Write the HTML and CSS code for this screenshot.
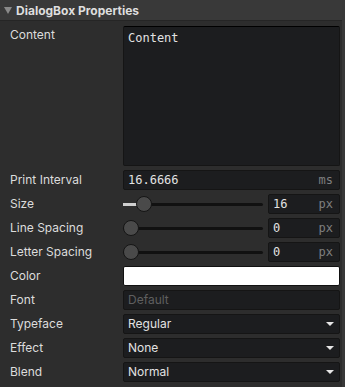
FILE: index.html
```html
<!DOCTYPE html>
<html lang="en">
<head>
  <meta charset="UTF-8" />
  <title>DialogBox Properties</title>
  <link rel="stylesheet" href="styles.css">
</head>
<body>
  <div class="panel">
    <header class="panel-head"><span class="caret"></span>DialogBox Properties</header>

    <div class="props">
      <div class="row row-tall">
        <label>Content</label>
        <textarea class="field mono area">Content</textarea>
      </div>

      <div class="row">
        <label>Print Interval</label>
        <div class="field unit-field">
          <span class="mono value">16.6666</span>
          <span class="mono unit">ms</span>
        </div>
      </div>

      <div class="row">
        <label>Size</label>
        <div class="slider">
          <div class="track"></div>
          <div class="fill" style="width: 14px"></div>
          <div class="thumb" style="left: 13px"></div>
        </div>
        <div class="field unit-field num">
          <span class="mono value">16</span>
          <span class="mono unit">px</span>
        </div>
      </div>

      <div class="row">
        <label>Line Spacing</label>
        <div class="slider">
          <div class="track"></div>
          <div class="thumb" style="left: 0px"></div>
        </div>
        <div class="field unit-field num">
          <span class="mono value">0</span>
          <span class="mono unit">px</span>
        </div>
      </div>

      <div class="row">
        <label>Letter Spacing</label>
        <div class="slider">
          <div class="track"></div>
          <div class="thumb" style="left: 0px"></div>
        </div>
        <div class="field unit-field num">
          <span class="mono value">0</span>
          <span class="mono unit">px</span>
        </div>
      </div>

      <div class="row">
        <label>Color</label>
        <div class="field swatch"></div>
      </div>

      <div class="row">
        <label>Font</label>
        <div class="field"><span class="placeholder">Default</span></div>
      </div>

      <div class="row">
        <label>Typeface</label>
        <div class="field select"><span>Regular</span><span class="arrow"></span></div>
      </div>

      <div class="row">
        <label>Effect</label>
        <div class="field select"><span>None</span><span class="arrow"></span></div>
      </div>

      <div class="row">
        <label>Blend</label>
        <div class="field select"><span>Normal</span><span class="arrow"></span></div>
      </div>
    </div>
  </div>
</body>
</html>
```

FILE: styles.css
```css
body {
  margin: 0;
  background: #2d2d2d;
  font-family: Inter, "Noto Sans", sans-serif;
  font-size: 12px;
  color: #dcdcdc;
}

.panel {
  width: 345px;
  height: 387px;
  background: #2d2d2d;
  border-right: 3px solid #383838;
  box-sizing: border-box;
}

.panel-head {
  display: flex;
  align-items: center;
  height: 20px;
  background: #393939;
  border-bottom: 1px solid #252525;
  font-weight: bold;
  font-size: 12px;
  color: #dedede;
}

.caret {
  width: 0;
  height: 0;
  margin: 0 4px 0 4px;
  border-left: 4px solid transparent;
  border-right: 4px solid transparent;
  border-top: 7px solid #8a8a8a;
}

.props {
  display: flex;
  flex-direction: column;
  gap: 4px;
  padding: 5px 2px 0 10px;
}

.row {
  display: flex;
  align-items: center;
  height: 20px;
  line-height: 14px;
}

.row label {
  padding-bottom: 1px;
}

.row-tall {
  height: 140px;
  align-items: flex-start;
}

.row-tall label {
  padding-top: 2px;
}

label {
  width: 113px;
  flex: none;
}

.field {
  flex: 1;
  display: flex;
  align-items: center;
  height: 20px;
  box-sizing: border-box;
  background: #1c1d1f;
  border: 1px solid #151515;
  border-radius: 2px;
  padding: 0 4px;
  color: #e2e2e2;
}

.mono {
  font-family: "DejaVu Sans Mono", "Liberation Mono", monospace;
  font-size: 12px;
}

.area {
  height: 140px;
  resize: none;
  border-top: 1px solid #000;
  padding: 4px 4px;
  outline: none;
  line-height: 14px;
}

.unit-field {
  justify-content: space-between;
}

.unit {
  color: #7f7f7f;
  padding-right: 2px;
}

.num {
  flex: none;
  width: 72px;
  margin-left: 5px;
}

.slider {
  position: relative;
  flex: 1;
  height: 20px;
}

.track {
  margin-top: 9px;
  height: 3px;
  background: #111;
  border-radius: 2px;
}

.fill {
  position: absolute;
  left: 0;
  top: 9px;
  height: 3px;
  background: #cfcfcf;
}

.thumb {
  position: absolute;
  top: 2px;
  width: 14px;
  height: 14px;
  border-radius: 50%;
  background: #4a4a4a;
  border: 1px solid #151515;
}

.swatch {
  background: #fff;
  border-color: #111;
}

.placeholder {
  color: #5f5f5f;
}

.select {
  justify-content: space-between;
}

.arrow {
  width: 0;
  height: 0;
  margin-right: 1px;
  border-left: 4px solid transparent;
  border-right: 4px solid transparent;
  border-top: 4px solid #e6e6e6;
}
```
